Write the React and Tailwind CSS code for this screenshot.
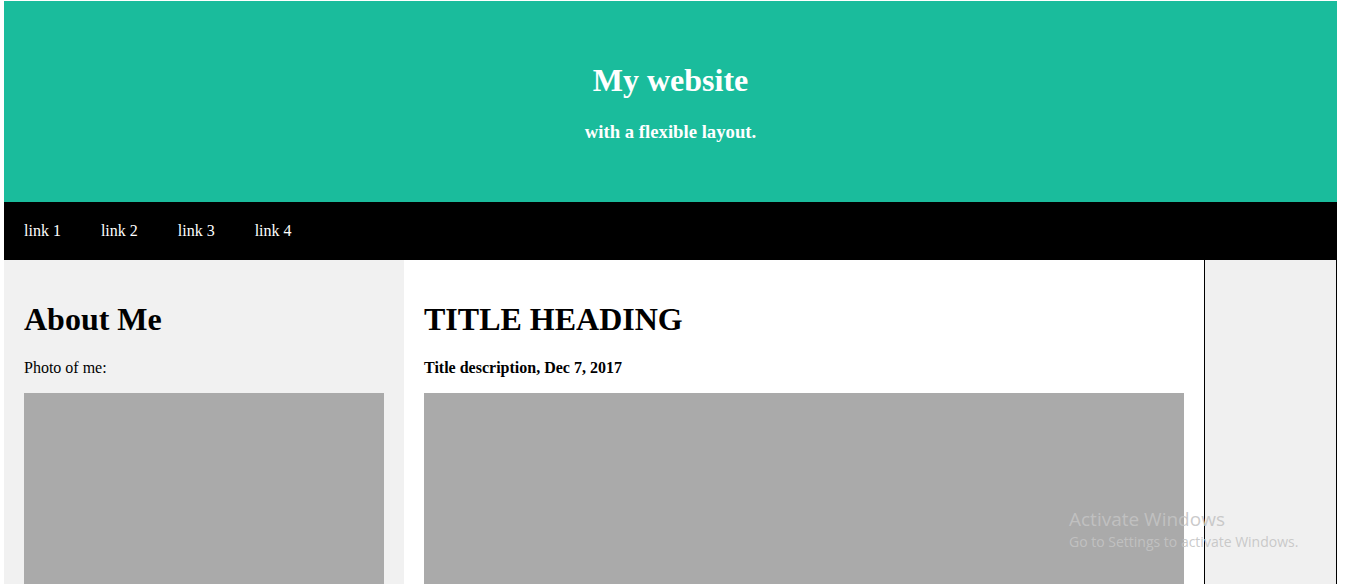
import React from 'react';

const links = ['link 1', 'link 2', 'link 3', 'link 4'];

export default function App() {
  return (
    <div className="relative h-[584px] overflow-hidden bg-white font-['Liberation_Serif','Times_New_Roman',serif] text-black">
      <div className="ml-[4px] mt-[1px] w-[1333px]">
        {/* Header */}
        <div className="bg-[#1abc9c] pt-[61px] pb-[59px] text-center text-white">
          <h1 className="mb-[21px] text-[32px] font-bold leading-[37px]">My website</h1>
          <p className="text-[18.72px] font-bold leading-[23px]">with a flexible layout.</p>
        </div>

        {/* Navbar */}
        <div className="flex bg-black">
          {links.map(l => (
            <a key={l} href="#" className="px-5 py-5 text-[16px] leading-[18px] text-white">
              {l}
            </a>
          ))}
        </div>

        {/* Columns */}
        <div className="flex h-[400px]">
          <div className="w-[400px] shrink-0 bg-[#f1f1f1] px-5 pt-5">
            <h2 className="my-[21px] text-[32px] font-bold leading-[37px]">About Me</h2>
            <p className="mb-4 text-[16px] leading-[18px]">Photo of me:</p>
            <div className="h-[200px] bg-[#aaaaaa]" />
          </div>

          <div className="w-[800px] shrink-0 bg-white px-5 pt-5">
            <h2 className="my-[21px] text-[32px] font-bold leading-[37px]">TITLE HEADING</h2>
            <p className="mb-4 text-[16px] font-bold leading-[18px]">Title description, Dec 7, 2017</p>
            <div className="h-[200px] bg-[#aaaaaa]" />
          </div>

          <div className="flex-1 border border-t-0 border-black bg-[#f0f0f0]" />
        </div>
      </div>

      {/* OS watermark */}
      <div className="pointer-events-none absolute left-[1069px] top-[507px] font-['Open_Sans',sans-serif] text-[#c4c4c4]/90">
        <div className="text-[19px] leading-[24px]">Activate Windows</div>
        <div className="text-[14px] leading-[21px]">Go to Settings to activate Windows.</div>
      </div>
    </div>
  );
}
